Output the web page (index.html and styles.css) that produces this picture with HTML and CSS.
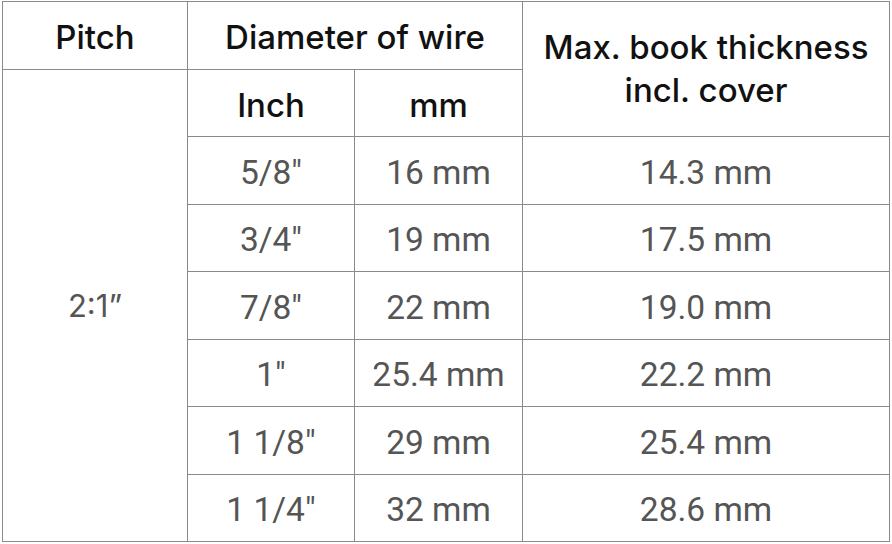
FILE: index.html
```html
<!DOCTYPE html>
<html>
<head>
<meta charset="utf-8">
<link rel="stylesheet" href="styles.css">
</head>
<body>
<table class="spec">
  <colgroup>
    <col class="c1"><col class="c2"><col class="c3"><col class="c4">
  </colgroup>
  <tbody>
    <tr>
      <th>Pitch</th>
      <th colspan="2">Diameter of wire</th>
      <th rowspan="2" class="wrap">Max. book thickness<br>incl. cover</th>
    </tr>
    <tr>
      <td rowspan="7" class="pitch">2:1”</td>
      <th>Inch</th>
      <th>mm</th>
    </tr>
    <tr><td>5/8"</td><td>16 mm</td><td>14.3 mm</td></tr>
    <tr><td>3/4"</td><td>19 mm</td><td>17.5 mm</td></tr>
    <tr><td>7/8"</td><td>22 mm</td><td>19.0 mm</td></tr>
    <tr><td>1"</td><td>25.4 mm</td><td>22.2 mm</td></tr>
    <tr><td>1 1/8"</td><td>29 mm</td><td>25.4 mm</td></tr>
    <tr><td>1 1/4"</td><td>32 mm</td><td>28.6 mm</td></tr>
  </tbody>
</table>
</body>
</html>
```
FILE: styles.css
```css
html, body {
  margin: 0;
  padding: 0;
  background: #ffffff;
}
body {
  padding: 1px 0 0 2px;
}
.spec {
  border-collapse: collapse;
  table-layout: fixed;
  width: 887px;
}
.c1 { width: 185px; }
.c2 { width: 167px; }
.c3 { width: 168px; }
.c4 { width: 367px; }
.spec tr {
  height: 67.5px;
}
.spec th,
.spec td {
  border: 1px solid #8a8a8a;
  padding: 0;
  text-align: center;
  vertical-align: middle;
}
.spec th {
  font-family: Inter, "Noto Sans", sans-serif;
  font-weight: 500;
  font-size: 33px;
  color: #111111;
  padding-top: 4px;
}
.spec th.wrap {
  line-height: 43px;
  padding-top: 0;
}
.spec td {
  font-family: Roboto, "Liberation Sans", sans-serif;
  font-size: 33.5px;
  color: #555555;
  padding-top: 4px;
}
.spec td.pitch {
  font-family: Inter, Roboto, sans-serif;
  font-size: 31px;
  padding-top: 0;
}
```
